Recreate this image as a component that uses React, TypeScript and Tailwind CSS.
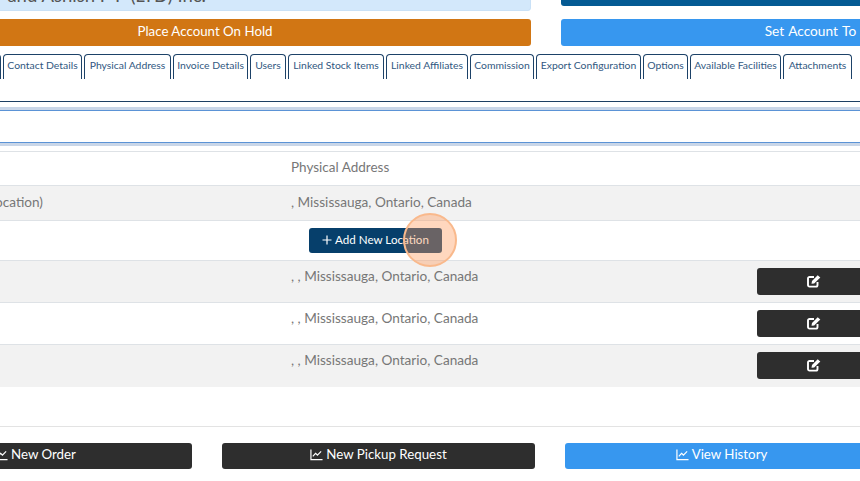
import React from 'react';

const tabs: [string, string][] = [
  ['Contact Details', 'w-[79px]'],
  ['Physical Address', 'w-[87px]'],
  ['Invoice Details', 'w-[75px]'],
  ['Users', 'w-[36px]'],
  ['Linked Stock Items', 'w-[96px]'],
  ['Linked Affiliates', 'w-[82px]'],
  ['Commission', 'w-[64px]'],
  ['Export Configuration', 'w-[105px]'],
  ['Options', 'w-[45px]'],
  ['Available Facilities', 'w-[91px]'],
  ['Attachments', 'w-[69px]'],
];

const ChartIcon = () => (
  <svg width="13" height="13" viewBox="0 0 14 14" fill="none" stroke="currentColor" strokeWidth="1.3" className="shrink-0">
    <path d="M1 1.5V12.5H13.5" />
    <path d="M3 9L6 5.8L8 7.6L12 3.6" />
  </svg>
);

const EditIcon = () => (
  <svg width="14" height="14" viewBox="0 0 14 14" fill="none" className="ml-[1px] mb-[2px] text-white">
    <path d="M10.5 8V11C10.5 11.9 9.9 12.6 9 12.6H2.5C1.7 12.6 1 11.9 1 11V4.5C1 3.7 1.7 3 2.5 3H7" stroke="currentColor" strokeWidth="1.9" />
    <path d="M4.5 9.8L5 7L10.7 1.2L13.3 3.6L7.2 9.4Z" fill="currentColor" />
  </svg>
);

const AddressRow = ({ shaded, last }: { shaded: boolean; last?: boolean }) => (
  <div className={`flex h-[42px] pl-[291px] pt-[7px] ${last ? '' : 'border-b border-[#dee2e6]'} ${shaded ? 'bg-[#f2f2f2]' : 'bg-white'}`}>
    <span className="-mt-[2px] w-[466px] shrink-0 text-[13.6px] leading-5 text-[#777777]">, , Mississauga, Ontario, Canada</span>
    <button className="flex h-[27px] w-[112px] shrink-0 items-center justify-center rounded-[3px] bg-[#2e2e2e]">
      <EditIcon />
    </button>
  </div>
);

const BottomButton = ({ label, className }: { label: string; className: string }) => (
  <button className={`flex h-[26px] w-[313px] shrink-0 items-center justify-center gap-[3px] rounded-[3px] pb-[3px] text-[13.3px] text-white ${className}`}>
    <ChartIcon />
    {label}
  </button>
);

export default function App() {
  return (
    <div className="relative h-[481px] w-[860px] overflow-hidden bg-white font-['Lato','Open_Sans',sans-serif]">
      {/* top summary strip, scrolled out of view */}
      <div className="ml-[-121px] flex h-[19px] gap-[30px]">
        <div className="-mt-[9px] h-[20px] w-[652px] shrink-0 rounded-[3px] border border-[#c9e1f7] bg-[#d3e8fb] text-[18.5px] leading-[14px] whitespace-nowrap text-[#555555]">
          <div className="-mt-[4px] w-[326px] text-right">and Ashish P P (LTD) Inc.</div>
        </div>
        <div className="-mt-[9px] h-[15px] w-[541px] shrink-0 rounded-[3px] bg-[#045a93]" />
      </div>

      <div className="ml-[-121px] flex gap-[30px]">
        <button className="h-[27px] w-[652px] shrink-0 rounded-[3px] bg-[#d17614] pb-[2px] text-[13.3px] text-white">Place Account On Hold</button>
        <button className="h-[27px] w-[541px] shrink-0 rounded-[3px] bg-[#3797ef] pb-[2px] text-[13.7px] [word-spacing:1px] text-white">Set Account To Active</button>
      </div>

      {/* tabs */}
      <div className="ml-[-10px] mt-[8px] flex h-[25px] gap-[2px]">
        <div className="w-[11px] shrink-0 rounded-t-[4px] border border-b-0 border-[#1d4268]" />
        {tabs.map(([label, width]) => (
          <div
            key={label}
            className={`flex shrink-0 items-center justify-center rounded-t-[4px] border border-b-0 border-[#1d4268] pb-[2px] text-[10.4px] whitespace-nowrap text-[#31587f] ${width}`}
          >
            {label}
          </div>
        ))}
      </div>

      <div className="mt-[22px] h-[1px] bg-[#1d3f63]" />
      <div className="mt-[5px] h-[3px] bg-[#c9d6e8]" />
      <div className="h-[33px] border-y border-[#5b93d6] bg-white" />
      <div className="h-[3px] bg-[#c9d6e8]" />

      {/* locations table */}
      <div className="mt-[5px] flex h-[35px] items-center border-y border-[#dee2e6] pb-[2px] pl-[291px] text-[13.5px] text-[#777777]">
        Physical Address
      </div>
      <div className="flex h-[35px] items-center border-b border-[#dee2e6] bg-[#f2f2f2] pb-[2px] text-[13.6px] text-[#777777]">
        <div className="flex w-[43px] justify-end whitespace-nowrap">Head Office (Default Location)</div>
        <div className="ml-[248px]">, Mississauga, Ontario, Canada</div>
      </div>
      <div className="flex h-[40px] items-center border-b border-[#dee2e6] pl-[309px]">
        <button className="flex h-[25px] w-[133px] items-center justify-center gap-[3px] rounded-[3px] bg-[#063f6b] pb-[2px] text-[11.6px] text-white">
          <svg width="10" height="10" viewBox="0 0 10 10" stroke="currentColor" strokeWidth="1.2">
            <path d="M5 0.5V9.5M0.5 5H9.5" />
          </svg>
          Add New Location
        </button>
      </div>
      <AddressRow shaded />
      <AddressRow shaded={false} />
      <AddressRow shaded last />

      <div className="mt-[39px] h-[1px] bg-[#e3e3e3]" />

      <div className="ml-[-121px] mt-[16px] flex gap-[30px]">
        <BottomButton label="New Order" className="bg-[#2e2e2e]" />
        <BottomButton label="New Pickup Request" className="bg-[#2e2e2e]" />
        <BottomButton label="View History" className="bg-[#3797ef]" />
      </div>

      {/* click highlight */}
      <div className="absolute left-[403px] top-[213px] h-[54px] w-[54px] rounded-full border-2 border-[#f9b98c] bg-[#ff9a5c]/40" />
    </div>
  );
}
